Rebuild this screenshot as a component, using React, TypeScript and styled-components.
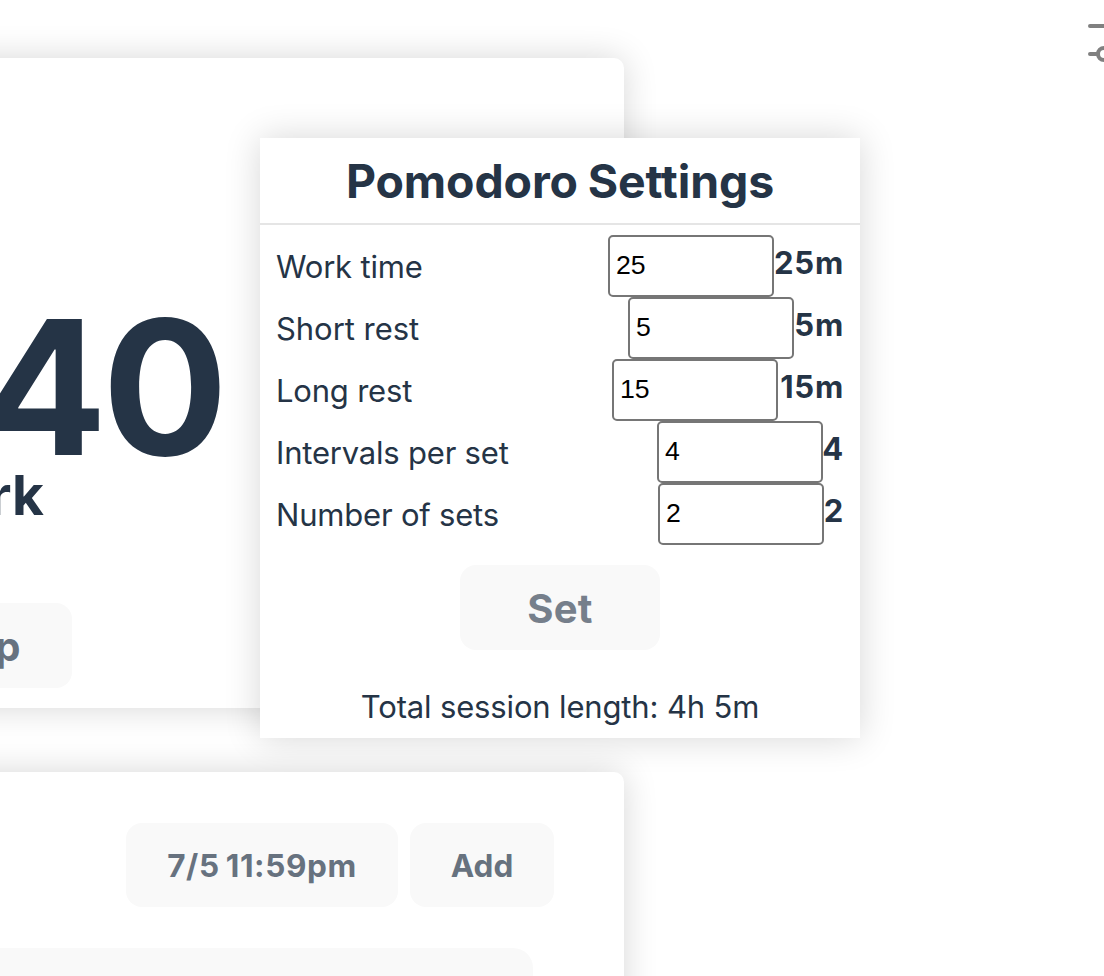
import React from "react";
import styled, { createGlobalStyle } from "styled-components";

const GlobalStyle = createGlobalStyle`
  * { box-sizing: border-box; }
  html, body { margin: 0; background: #fff; overflow: hidden; }
  button, input { margin: 0; }
`;

const ink = "#253446";
const muted = "#67727f";

const Page = styled.div`
  position: relative;
  display: flex;
  justify-content: space-between;
  width: 1104px;
  height: 976px;
  overflow: hidden;
  color: ${ink};
  font-family: Inter, "Liberation Sans", sans-serif;
  white-space: nowrap;
`;

const Column = styled.main`
  display: flex;
  flex-direction: column;
  gap: 64px;
  width: 624px;
  padding-top: 58px;
`;

const Card = styled.section<{ $height: number }>`
  display: flex;
  flex-direction: column;
  align-items: flex-end;
  flex: none;
  width: 700px;
  height: ${(p) => p.$height}px;
  margin-left: -76px;
  border-radius: 10px;
  background: #fff;
  box-shadow: 0 0 34px rgba(0, 0, 0, 0.16);
`;

const Clock = styled.div`
  margin: 213px 401px 0 0;
  font-size: 186.5px;
  font-weight: 700;
  line-height: 232px;
  letter-spacing: -5px;
`;

const Phase = styled.div`
  margin: -42px 580px 0 0;
  font-size: 55px;
  font-weight: 700;
  line-height: 68px;
`;

const Button = styled.button<{
  $width: number;
  $size: number;
  $tall?: boolean;
  $color?: string;
  $spacing?: number;
}>`
  display: flex;
  align-items: center;
  justify-content: center;
  flex: none;
  width: ${(p) => p.$width}px;
  height: ${(p) => (p.$tall ? 85 : 84)}px;
  padding: ${(p) => (p.$tall ? 2 : 0)}px 0 0;
  border: 0;
  border-radius: 16px;
  background: #f9f9f9;
  color: ${(p) => p.$color ?? muted};
  font: 700 ${(p) => p.$size}px Inter, sans-serif;
  letter-spacing: ${(p) => p.$spacing ?? 0}px;
  word-spacing: -2px;
`;

const TimerActions = styled.div`
  margin: 74px 552px 0 0;
`;

const TaskActions = styled.div`
  display: flex;
  gap: 12px;
  margin: 51px 70px 0 0;
`;

const TaskItem = styled.div`
  width: 600px;
  height: 90px;
  margin: 41px 91px 0 0;
  border-radius: 20px;
  background: #f9f9f9;
`;

const MenuIcon = styled.svg`
  flex: none;
  width: 16px;
  height: 80px;
  stroke: #808080;
  stroke-width: 4;
  stroke-linecap: round;
  fill: none;
`;

const Dialog = styled.div`
  position: absolute;
  left: 260px;
  top: 138px;
  display: flex;
  flex-direction: column;
  align-items: center;
  width: 600px;
  height: 600px;
  background: #fff;
  box-shadow: 0 0 34px rgba(0, 0, 0, 0.16);
`;

const Title = styled.h1`
  width: 100%;
  height: 87px;
  margin: 0 0 10px;
  border-bottom: 2px solid #e5e5e5;
  font-size: 46.4px;
  line-height: 87px;
  letter-spacing: -0.1px;
  word-spacing: -1px;
  text-align: center;
`;

const Row = styled.label`
  display: flex;
  width: 568px;
  height: 62px;
  font-size: 31px;
`;

const Label = styled.span<{ $spacing: number }>`
  flex: 1;
  line-height: 63px;
  letter-spacing: ${(p) => p.$spacing}px;
`;

const Field = styled.input`
  width: 166px;
  height: 62px;
  padding: 0 6px 2px;
  border: 2px solid #767676;
  border-radius: 5px;
  outline: none;
  background: #fff;
  color: #000;
  font: 26.67px "Liberation Sans", sans-serif;
`;

const Value = styled.strong<{ $width: number }>`
  display: flex;
  justify-content: flex-end;
  width: ${(p) => p.$width}px;
  padding-left: 1px;
  line-height: 55px;
  letter-spacing: 0.8px;
  text-indent: 1px;
`;

const SetRow = styled.div`
  margin-top: 20px;
`;

const Total = styled.div`
  margin-top: 37px;
  font-size: 31px;
  line-height: 40px;
  letter-spacing: -0.15px;
`;

const settings = [
  { label: "Work time", value: 25, shown: "25m", width: 70, spacing: -0.2 },
  { label: "Short rest", value: 5, shown: "5m", width: 50, spacing: -0.05 },
  { label: "Long rest", value: 15, shown: "15m", width: 66, spacing: -0.2 },
  { label: "Intervals per set", value: 4, shown: "4", width: 21, spacing: -0.2 },
  { label: "Number of sets", value: 2, shown: "2", width: 20, spacing: -0.2 },
];

export default function App() {
  return (
    <>
      <GlobalStyle />
      <Page>
        <Column>
          <Card $height={650}>
            <Clock>40</Clock>
            <Phase>Work</Phase>
            <TimerActions>
              <Button $width={193} $size={40} $tall>Stop</Button>
            </TimerActions>
          </Card>
          <Card $height={300}>
            <TaskActions>
              <Button $width={272} $size={31.5} $spacing={0.6}>7/5 11:59pm</Button>
              <Button $width={144} $size={31.5}>Add</Button>
            </TaskActions>
            <TaskItem />
          </Card>
        </Column>
        <MenuIcon viewBox="0 0 16 80">
          <path d="M2 26H20M2 54H10" />
          <circle cx="16" cy="54" r="6" />
        </MenuIcon>
        <Dialog role="dialog">
          <Title>Pomodoro Settings</Title>
          {settings.map((s) => (
            <Row key={s.label}>
              <Label $spacing={s.spacing}>{s.label}</Label>
              <Field defaultValue={s.value} />
              <Value $width={s.width}>{s.shown}</Value>
            </Row>
          ))}
          <SetRow>
            <Button $width={200} $size={40} $tall $color="#767f8b" $spacing={0.3}>Set</Button>
          </SetRow>
          <Total>Total session length: 4h 5m</Total>
        </Dialog>
      </Page>
    </>
  );
}
